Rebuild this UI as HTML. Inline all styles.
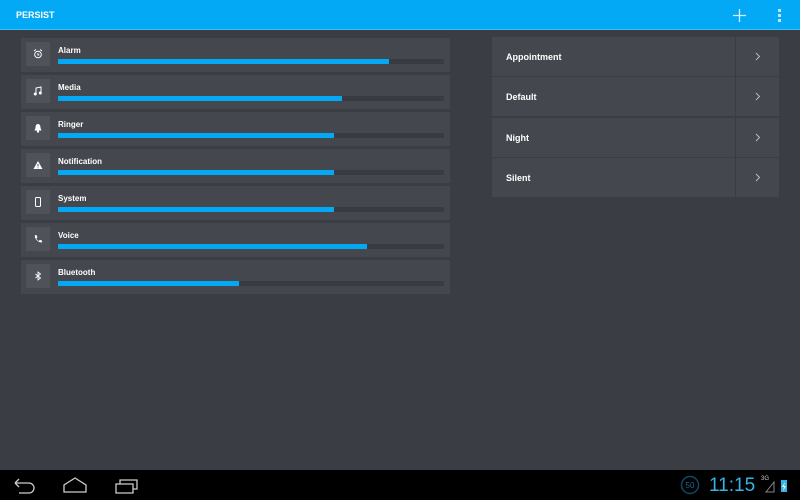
<!DOCTYPE html>
<html><head><style>
*{margin:0;padding:0;box-sizing:border-box}
body{width:800px;height:500px;background:#3b3d45;font-family:"Liberation Sans",sans-serif;position:relative;overflow:hidden;color:#fff}
.top{position:absolute;left:0;top:0;width:800px;height:30px;background:#03a9f4;border-bottom:1px solid #3fc0f8}
.top .t{position:absolute;left:16px;top:10px;font-size:9px;font-weight:bold}
.row{position:absolute;left:21px;width:429px;height:34px;background:#45474f}
.ib{position:absolute;left:5px;top:4px;width:24px;height:24px;background:#50525a;display:flex;align-items:center;justify-content:center}
.lb{position:absolute;left:37px;top:8px;font-size:8px;font-weight:bold}
.bar{position:absolute;left:37px;top:21px;width:386px;height:5px;background:#393b42}
.bar i{display:block;height:100%;background:#03a9f4}
.r{position:absolute;left:492px;width:287px;height:39px;background:#45474f}
.r span{position:absolute;left:14px;top:15px;font-size:9px;font-weight:bold}
.r b{position:absolute;left:243px;top:0;width:1px;height:100%;background:#3a3c43}
.r svg{position:absolute;left:263px;top:15px}
.nav{position:absolute;left:0;top:470px;width:800px;height:30px;background:#000}
</style></head><body>
<div class="top"><div class="t">PERSIST</div>
<svg style="position:absolute;left:732px;top:8px" width="15" height="15"><path d="M7.5 1v13M1 7.5h13" stroke="#d8f0fc" stroke-width="1.3"/></svg>
<svg style="position:absolute;left:777px;top:9px" width="5" height="14"><rect x="1" y="0" width="3" height="3" fill="#bde6fb"/><rect x="1" y="5" width="3" height="3" fill="#bde6fb"/><rect x="1" y="10" width="3" height="3" fill="#bde6fb"/></svg>
</div>

<div class="row" style="top:38px"><div class="ib"><svg width="10" height="10"><circle cx="5" cy="5.5" r="3.3" fill="none" stroke="#fff" stroke-width="1"/><path d="M5 4v2h1.3M1 2l2-1.5M9 2L7 .5" stroke="#fff" stroke-width="1" fill="none"/></svg></div><div class="lb">Alarm</div><div class="bar"><i style="width:331px"></i></div></div>
<div class="row" style="top:75px"><div class="ib"><svg width="10" height="10"><path d="M3 8V2l5-1v6" stroke="#fff" fill="none"/><circle cx="2.3" cy="8" r="1.5" fill="#fff"/><circle cx="7.3" cy="7" r="1.5" fill="#fff"/></svg></div><div class="lb">Media</div><div class="bar"><i style="width:284px"></i></div></div>
<div class="row" style="top:112px"><div class="ib"><svg width="10" height="10"><path d="M5 1C3 1 2.5 3 2.5 5L1.5 7.5h7L7.5 5C7.5 3 7 1 5 1z" fill="#fff"/><circle cx="5" cy="8.5" r="1.2" fill="#fff"/></svg></div><div class="lb">Ringer</div><div class="bar"><i style="width:276px"></i></div></div>
<div class="row" style="top:149px"><div class="ib"><svg width="10" height="10"><path d="M5 1L9.5 9H.5z" fill="#fff"/><path d="M5 4v2.5M5 7.5v.8" stroke="#45474f" stroke-width="1"/></svg></div><div class="lb">Notification</div><div class="bar"><i style="width:276px"></i></div></div>
<div class="row" style="top:186px"><div class="ib"><svg width="10" height="10"><rect x="2.5" y=".5" width="5" height="9" rx="1" fill="none" stroke="#fff"/></svg></div><div class="lb">System</div><div class="bar"><i style="width:276px"></i></div></div>
<div class="row" style="top:223px"><div class="ib"><svg width="10" height="10"><path d="M2 1l2 .5.3 2-1 1c.6 1.3 1.4 2 2.5 2.5l1-1 2 .4.3 2C6 9 1 5 2 1z" fill="#fff"/></svg></div><div class="lb">Voice</div><div class="bar"><i style="width:309px"></i></div></div>
<div class="row" style="top:260px"><div class="ib"><svg width="10" height="10"><path d="M2.5 3l5 4L5 9V1l2.5 2-5 4" stroke="#fff" fill="none" stroke-width=".9"/></svg></div><div class="lb">Bluetooth</div><div class="bar"><i style="width:181px"></i></div></div>

<div class="r" style="top:37px"><span>Appointment</span><b></b><svg width="6" height="9"><path d="M1 1l3.5 3.5L1 8" stroke="#bbb" fill="none"/></svg></div>
<div class="r" style="top:77px"><span>Default</span><b></b><svg width="6" height="9"><path d="M1 1l3.5 3.5L1 8" stroke="#bbb" fill="none"/></svg></div>
<div class="r" style="top:118px"><span>Night</span><b></b><svg width="6" height="9"><path d="M1 1l3.5 3.5L1 8" stroke="#bbb" fill="none"/></svg></div>
<div class="r" style="top:158px"><span>Silent</span><b></b><svg width="6" height="9"><path d="M1 1l3.5 3.5L1 8" stroke="#bbb" fill="none"/></svg></div>

<div class="nav">
<svg style="position:absolute;left:12px;top:8px" width="26" height="16"><path d="M3 5h14a5 5 0 010 10H7M3 5l4-4M3 5l4 4" stroke="#ccc" fill="none" stroke-width="1.3"/></svg>
<svg style="position:absolute;left:62px;top:6px" width="26" height="18"><path d="M2 16V9L13 2l11 7v7z" stroke="#ccc" fill="none" stroke-width="1.3"/></svg>
<svg style="position:absolute;left:113px;top:6px" width="26" height="18"><path d="M3 8h17v9H3zM7 8V4h17v9h-4" stroke="#ccc" fill="none" stroke-width="1.3"/></svg>
<svg style="position:absolute;left:680px;top:5px" width="20" height="20"><circle cx="10" cy="10" r="8.5" fill="none" stroke="#0a4a6a" stroke-width="1.5"/><text x="10" y="13" font-size="8" fill="#1a6b93" text-anchor="middle" font-family="Liberation Sans">50</text></svg>
<div style="position:absolute;left:709px;top:5px;font-size:19px;color:#33b5e5">11:15</div>
<div style="position:absolute;left:761px;top:6px;font-size:6px;color:#ccc">3G</div>
<svg style="position:absolute;left:763px;top:8px" width="28" height="16"><path d="M11 14L3 14 11 4z" fill="none" stroke="#888" stroke-width="1"/><rect x="18" y="2" width="6" height="12" fill="#33b5e5"/><path d="M22 4l-3 5h2l-1 4 3-5h-2z" fill="#fff"/></svg>
</div>
</body></html>
